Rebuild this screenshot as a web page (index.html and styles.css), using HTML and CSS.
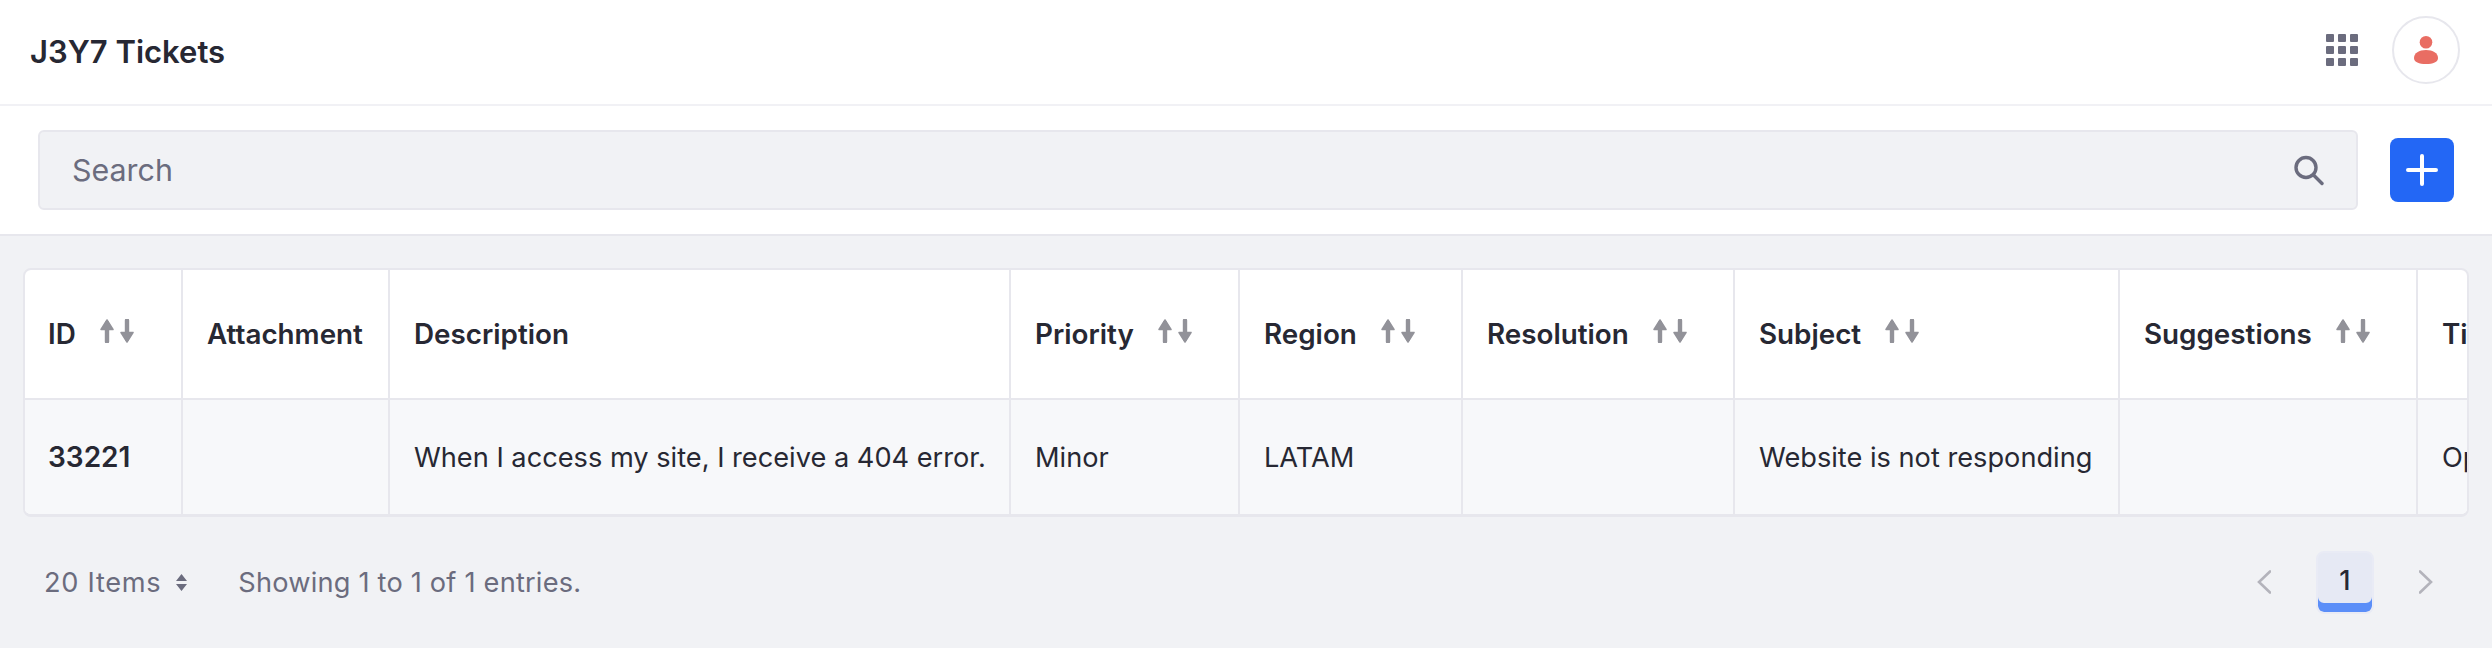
FILE: index.html
```html
<!DOCTYPE html>
<html lang="en">
<head>
<meta charset="UTF-8">
<meta name="viewport" content="width=device-width, initial-scale=1.0">
<title>J3Y7 Tickets</title>
<link rel="stylesheet" href="styles.css">
</head>
<body>

<header class="topbar">
    <h1 class="app-title">J3Y7 Tickets</h1>
    <div class="topbar-actions">
        <svg class="apps-icon" width="32" height="32" viewBox="0 0 32 32">
            <rect x="0" y="0" width="8" height="8" rx="1"/><rect x="12" y="0" width="8" height="8" rx="1"/><rect x="24" y="0" width="8" height="8" rx="1"/>
            <rect x="0" y="12" width="8" height="8" rx="1"/><rect x="12" y="12" width="8" height="8" rx="1"/><rect x="24" y="12" width="8" height="8" rx="1"/>
            <rect x="0" y="24" width="8" height="8" rx="1"/><rect x="12" y="24" width="8" height="8" rx="1"/><rect x="24" y="24" width="8" height="8" rx="1"/>
        </svg>
        <div class="avatar">
            <svg width="24" height="28" viewBox="0 0 24 28">
                <circle cx="12" cy="6.3" r="6.3"/>
                <path d="M12 14c7 0 12 3 12 8 0 4-5 6-12 6S0 26 0 22c0-5 5-8 12-8z"/>
            </svg>
        </div>
    </div>
</header>

<div class="toolbar">
    <div class="search-box">
        <span class="search-placeholder">Search</span>
        <svg class="search-icon" width="30" height="32" viewBox="0 0 30 32">
            <circle cx="12" cy="13.5" r="10"/>
            <path d="M19.5 21L28 29.5"/>
        </svg>
    </div>
    <button class="add-btn" type="button">
        <svg width="32" height="32" viewBox="0 0 32 32"><path d="M16 2v28M2 16h28"/></svg>
    </button>
</div>

<main class="content">
    <div class="table-wrap">
        <table class="data-table">
            <colgroup>
                <col class="col-id">
                <col class="col-attachment">
                <col class="col-description">
                <col class="col-priority">
                <col class="col-region">
                <col class="col-resolution">
                <col class="col-subject">
                <col class="col-suggestions">
                <col class="col-status">
            </colgroup>
            <thead>
                <tr>
                    <th class="cell-first"><span class="th-inner">ID <svg class="sort-icon" viewBox="0 0 34 24"><use href="#sort"/></svg></span></th>
                    <th>Attachment</th>
                    <th>Description</th>
                    <th><span class="th-inner">Priority <svg class="sort-icon" viewBox="0 0 34 24"><use href="#sort"/></svg></span></th>
                    <th><span class="th-inner">Region <svg class="sort-icon" viewBox="0 0 34 24"><use href="#sort"/></svg></span></th>
                    <th><span class="th-inner">Resolution <svg class="sort-icon" viewBox="0 0 34 24"><use href="#sort"/></svg></span></th>
                    <th><span class="th-inner">Subject <svg class="sort-icon" viewBox="0 0 34 24"><use href="#sort"/></svg></span></th>
                    <th><span class="th-inner">Suggestions <svg class="sort-icon" viewBox="0 0 34 24"><use href="#sort"/></svg></span></th>
                    <th>Ticket Status</th>
                </tr>
            </thead>
            <tbody>
                <tr>
                    <td class="cell-first cell-id">33221</td>
                    <td></td>
                    <td>When I access my site, I receive a 404 error.</td>
                    <td>Minor</td>
                    <td>LATAM</td>
                    <td></td>
                    <td>Website is not responding</td>
                    <td></td>
                    <td>Open</td>
                </tr>
            </tbody>
        </table>
    </div>

    <footer class="table-footer">
        <div class="footer-info">
            <span class="page-size">20 Items
                <svg width="11" height="17" viewBox="0 0 11 17"><path d="M5.5 0l5.5 7H0zM5.5 17L0 10h11z"/></svg>
            </span>
            <span class="entries">Showing 1 to 1 of 1 entries.</span>
        </div>
        <nav class="pagination">
            <svg class="chevron" width="14" height="24" viewBox="0 0 14 24"><path d="M13 1.5L2 12l11 10.5"/></svg>
            <span class="page-current">1</span>
            <svg class="chevron" width="14" height="24" viewBox="0 0 14 24"><path d="M1 1.5L12 12 1 22.5"/></svg>
        </nav>
    </footer>
</main>

<svg class="sprite" width="0" height="0">
    <symbol id="sort" viewBox="0 0 34 24">
        <path class="sort-stem" d="M7 22.5V4M27 1.5V20"/>
        <path class="sort-head" d="M1 10.5L7 1l6 9.5zM21 13.5L27 23l6-9.5z"/>
    </symbol>
</svg>

</body>
</html>
```

FILE: styles.css
```css
* {
    box-sizing: border-box;
}

html, body {
    height: 100%;
}

body {
    margin: 0;
    overflow: hidden;
    font-family: Inter, "Liberation Sans", sans-serif;
    font-size: 27.2px;
    color: #272833;
    background-color: #f1f2f5;
}

.topbar {
    display: flex;
    align-items: center;
    justify-content: space-between;
    height: 106px;
    padding: 0 32px 4px 30px;
    background-color: #fff;
    border-bottom: 2px solid #f1f1f5;
}

.app-title {
    margin: 0;
    padding-top: 3px;
    font-size: 31px;
    font-weight: 600;
}

.topbar-actions {
    display: flex;
    align-items: center;
    gap: 34px;
}

.apps-icon {
    display: block;
    fill: #6b6c7e;
}

.avatar {
    display: flex;
    align-items: center;
    justify-content: center;
    width: 68px;
    height: 68px;
    border: 2px solid #e7e7ed;
    border-radius: 50%;
    fill: #e96d63;
}

.toolbar {
    display: flex;
    align-items: center;
    gap: 32px;
    height: 130px;
    padding: 0 38px;
    background-color: #fff;
    border-bottom: 2px solid #e7e7ed;
}

.search-box {
    flex: 1;
    display: flex;
    align-items: center;
    justify-content: space-between;
    height: 80px;
    padding: 0 32px;
    background-color: #f1f2f5;
    border: 2px solid #e7e7ed;
    border-radius: 6px;
}

.search-placeholder {
    color: #6b6c7e;
    font-size: 30.4px;
}

.search-icon {
    fill: none;
    stroke: #6b6c7e;
    stroke-width: 3.4;
    stroke-linecap: round;
}

.add-btn {
    display: flex;
    align-items: center;
    justify-content: center;
    width: 64px;
    height: 64px;
    padding: 0;
    background-color: #2367f5;
    border: none;
    border-radius: 8px;
    stroke: #fff;
    stroke-width: 4;
    stroke-linecap: round;
}

.content {
    padding: 32px 23px 0;
}

.table-wrap {
    overflow: hidden;
    height: 249px;
    background-color: #fff;
    border: 2px solid #e7e7ed;
    border-bottom-width: 3px;
    border-radius: 8px;
}

.data-table {
    table-layout: fixed;
    width: 2693px;
    border-collapse: separate;
    border-spacing: 0;
}

.col-id { width: 158px; }
.col-attachment { width: 207px; }
.col-description { width: 621px; }
.col-priority { width: 229px; }
.col-region { width: 223px; }
.col-resolution { width: 272px; }
.col-subject { width: 385px; }
.col-suggestions { width: 298px; }
.col-status { width: 300px; }

.data-table th,
.data-table td {
    padding: 0 24px;
    text-align: left;
    white-space: nowrap;
    overflow: hidden;
    border-right: 2px solid #e7e7ed;
}

.data-table .cell-first {
    padding-left: 23px;
}

.data-table th {
    height: 130px;
    font-size: 27.8px;
    font-weight: 600;
    border-bottom: 2px solid #e7e7ed;
}

.data-table td {
    height: 114px;
    background-color: #f7f8fa;
}

.data-table .cell-id {
    font-size: 28px;
    font-weight: 600;
}

.th-inner {
    display: inline-flex;
    align-items: center;
    gap: 24px;
}

.sort-icon {
    width: 34px;
    height: 24px;
    margin-bottom: 6px;
}

.sort-stem {
    fill: none;
    stroke: #929299;
    stroke-width: 4.4;
    stroke-linecap: round;
}

.sort-head {
    fill: #929299;
    stroke: #929299;
    stroke-width: 1.5;
    stroke-linejoin: round;
}

.sprite {
    position: absolute;
}

.table-footer {
    display: flex;
    align-items: center;
    justify-content: space-between;
    height: 130px;
    padding: 0 36px 0 21px;
    color: #6b6c7e;
}

.footer-info {
    display: flex;
    align-items: center;
    gap: 51px;
}

.page-size {
    display: flex;
    align-items: center;
    gap: 15px;
    fill: #6b6c7e;
    letter-spacing: 0.7px;
}

.entries {
    letter-spacing: 0.2px;
}

.pagination {
    display: flex;
    align-items: center;
    gap: 45px;
}

.chevron {
    fill: none;
    stroke: #b3b3bb;
    stroke-width: 2.6;
    stroke-linecap: round;
}

.page-current {
    display: flex;
    align-items: center;
    justify-content: center;
    width: 58px;
    height: 63px;
    padding-bottom: 4px;
    color: #272833;
    font-weight: 500;
    background-color: #e6e9f4;
    border: 2px solid #e9ebf5;
    border-radius: 8px;
    box-shadow: inset 0 -9px 0 #5b8ef8;
}
```
